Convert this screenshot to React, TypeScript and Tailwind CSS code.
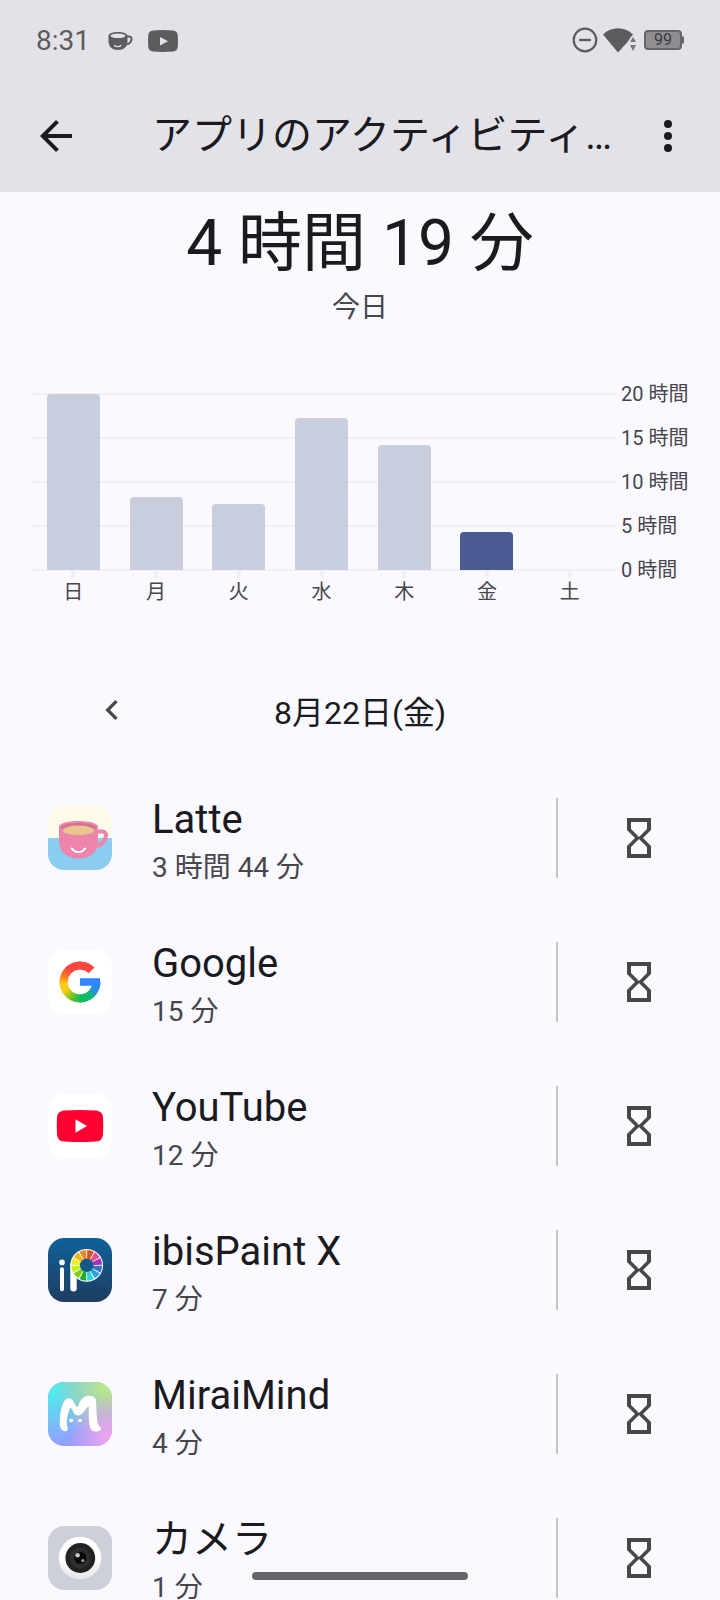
import type { ReactNode } from "react";

const axisLabels = ["20 時間", "15 時間", "10 時間", "5 時間", "0 時間"];

const days = [
  { label: "日", hours: 20 },
  { label: "月", hours: 8.3 },
  { label: "火", hours: 7.5 },
  { label: "水", hours: 17.3 },
  { label: "木", hours: 14.2 },
  { label: "金", hours: 4.32, today: true },
  { label: "土", hours: 0 },
];

function polar(cx: number, cy: number, r: number, deg: number) {
  const a = (deg * Math.PI) / 180;
  return `${(cx + r * Math.cos(a)).toFixed(2)} ${(cy + r * Math.sin(a)).toFixed(2)}`;
}

function LatteIcon() {
  return (
    <svg viewBox="0 0 64 64" className="size-16 rounded-2xl" aria-hidden="true">
      <rect width="64" height="32" fill="#fffbe8" />
      <rect y="32" width="64" height="32" fill="#8bccf1" />
      <path d="M49 25.500h5.500a3.500 3.500 0 0 1 3.500 4c-.5 5-4 9-10 11" fill="none" stroke="#ed84ac" strokeWidth="4" />
      <path d="M11 21c0-8 39-8 39 0v14c0 11-8 17.500-19.500 17.500S11 46 11 35z" fill="#ed84ac" />
      <ellipse cx="30.500" cy="21.800" rx="17.500" ry="4.800" fill="#d76f92" />
      <ellipse cx="30.500" cy="24.400" rx="15.600" ry="4.900" fill="#e8c58f" />
      <path d="M23.500 42.500c1 .2 1.500 .8 2 1.800 2 2.400 8 2.400 10 0 .4-1 1-1.600 2-1.800" fill="none" stroke="#fff" strokeWidth="1.800" strokeLinecap="round" />
    </svg>
  );
}

const gStops: [number, number[]][] = [
  [0, [255, 70, 65]],
  [85, [255, 70, 65]],
  [115, [255, 128, 30]],
  [140, [255, 205, 20]],
  [165, [240, 205, 20]],
  [195, [110, 195, 40]],
  [225, [14, 188, 95]],
  [255, [14, 188, 110]],
  [285, [40, 145, 220]],
  [300, [49, 134, 255]],
  [400, [49, 134, 255]],
];

function gColor(t: number) {
  let i = 0;
  while (i < gStops.length - 2 && gStops[i + 1][0] < t) i++;
  const [a, ca] = gStops[i];
  const [b, cb] = gStops[i + 1];
  const k = (t - a) / (b - a);
  return `rgb(${ca.map((v, n) => Math.round(v + (cb[n] - v) * k)).join(",")})`;
}

function GoogleIcon() {
  const steps = Array.from({ length: 63 }, (_, i) => i * 5);
  return (
    <svg viewBox="0 0 64 64" className="size-16 rounded-2xl" aria-hidden="true">
      <rect width="64" height="64" fill="#fff" />
      {steps.map((t) => (
        <path
          key={t}
          d={`M${polar(32, 32, 16.4, -45 - t)}A16.400 16.400 0 0 0 ${polar(32, 32, 16.4, -45 - Math.min(t + 8, 315))}`}
          fill="none"
          stroke={gColor(t)}
          strokeWidth="8"
        />
      ))}
      <path d="M32 28.200h20.100v4.500l-1.500 3H32z" fill="#3186ff" />
    </svg>
  );
}

function YouTubeIcon() {
  return (
    <svg viewBox="0 0 64 64" className="size-16 rounded-2xl" aria-hidden="true">
      <rect width="64" height="64" fill="#fff" />
      <path d="M16 16.500q16-1 32 0 6.500.5 7 7 .5 8.500 0 17-.5 6.500-7 7-16 1-32 0-6.500-.5-7-7-.5-8.500 0-17 .5-6.500 7-7z" fill="#ff0033" />
      <path d="M27.500 25.200v13.600L39 32z" fill="#fff" />
    </svg>
  );
}

const wheelColors = [
  "#d9531f", "#e0508c", "#9d35b8", "#3273c6", "#2f9fda", "#2bd6d8",
  "#22ab2e", "#80d022", "#c2f01c", "#f0ee1e", "#f2b41f", "#e98a1e",
];

function IbisPaintIcon() {
  return (
    <svg viewBox="0 0 64 64" className="size-16 rounded-2xl" aria-hidden="true">
      <defs>
        <linearGradient id="ibis-bg" x1="0" y1="0" x2="0" y2="1">
          <stop offset="0" stopColor="#10619a" />
          <stop offset="1" stopColor="#1e3d60" />
        </linearGradient>
      </defs>
      <rect width="64" height="64" fill="url(#ibis-bg)" />
      <circle cx="14" cy="24.400" r="2.800" fill="#fff" />
      <path d="M14 31.300v20" stroke="#fff" strokeWidth="4" strokeLinecap="round" />
      <path d="M25.500 27v23.300" stroke="#fff" strokeWidth="6.400" strokeLinecap="round" />
      <circle cx="38.700" cy="27.300" r="16.400" fill="#fff" />
      {wheelColors.map((color, i) => (
        <path
          key={color}
          d={`M${polar(38.7, 27.3, 15.4, i * 30 - 88)}A15.400 15.400 0 0 1 ${polar(38.7, 27.3, 15.4, i * 30 - 62)}L${polar(38.7, 27.3, 6.5, i * 30 - 63)}A6.500 6.500 0 0 0 ${polar(38.7, 27.3, 6.5, i * 30 - 87)}z`}
          fill={color}
        />
      ))}
      <circle cx="38.700" cy="27.300" r="6.800" fill="#16578a" />
    </svg>
  );
}

function MiraiMindIcon() {
  return (
    <svg viewBox="0 0 64 64" className="size-16 rounded-2xl" aria-hidden="true">
      <defs>
        <radialGradient id="mm-a" cx="0" cy="0.1" r="0.9">
          <stop offset="0" stopColor="#49f2ea" />
          <stop offset="1" stopColor="#49f2ea" stopOpacity="0" />
        </radialGradient>
        <radialGradient id="mm-b" cx="0.95" cy="0.05" r="0.85">
          <stop offset="0" stopColor="#bdf07c" />
          <stop offset="1" stopColor="#bdf07c" stopOpacity="0" />
        </radialGradient>
        <radialGradient id="mm-c" cx="0.95" cy="0.85" r="0.65">
          <stop offset="0" stopColor="#f3a4ec" />
          <stop offset="1" stopColor="#f3a4ec" stopOpacity="0" />
        </radialGradient>
      </defs>
      <rect width="64" height="64" fill="#949eff" />
      <rect width="64" height="64" fill="url(#mm-a)" />
      <rect width="64" height="64" fill="url(#mm-b)" />
      <rect width="64" height="64" fill="url(#mm-c)" />
      <path
        d="M16.500 49.200C12.500 48.500 11.500 44 11.700 39c.2-7 1.200-13 3.600-18 1.200-3 3-4.800 5-4.800 2.500 0 4 1 5.200 3.300l2.800 5c.5.800 1 .8 1.500 0C31.500 20 33 17 35.500 15.500c2-1.400 4.300-1.900 6.500-1.700 3.500.3 5.500 2 6 5.200.5 4.500.3 9.500.7 14 .3 4 .6 7.500 1.600 9.700.8 1.800 2.700 2 2.800 3.800.1 1.900-2.800 3-5.400 3-3.200 0-5-1.500-5.700-4.500-1-4-1.200-8-1.300-12l.2-7c-.1-1.500-1.300-1.700-2.300 0L35 30.500c-1 1.800-3 2.900-5 2.900-2 0-3.200-.8-4-2.400l-2-4c-.7-1.300-1.900-1.200-2.400.3-.8 2.200-1.500 4-2 6.700-.6 3-.9 5-.8 7.500.1 2 .8 3.300.9 5 .1 1.900-1.200 3-3.200 2.700z"
        fill="#fff"
      />
      <ellipse cx="23.200" cy="38.500" rx="2" ry="1.700" fill="#fff" />
      <ellipse cx="32" cy="38.500" rx="2" ry="1.700" fill="#fff" />
    </svg>
  );
}

function CameraIcon() {
  return (
    <svg viewBox="0 0 64 64" className="size-16 rounded-2xl" aria-hidden="true">
      <defs>
        <linearGradient id="cam-ring" x1="0" y1="0" x2="0" y2="1">
          <stop offset="0.5" stopColor="#fff" />
          <stop offset="1" stopColor="#e6e6ea" />
        </linearGradient>
      </defs>
      <rect width="64" height="64" fill="#cdcfd9" />
      <circle cx="32" cy="32" r="21.300" fill="url(#cam-ring)" />
      <circle cx="32.300" cy="32" r="14.900" fill="#222224" />
      <circle cx="32.300" cy="32" r="10.500" fill="#2e2e30" />
      <circle cx="32.300" cy="32" r="6" fill="#080809" />
      <circle cx="29.600" cy="29.200" r="2.300" fill="#c8c8ca" />
      <circle cx="34.800" cy="34.600" r="1.600" fill="#9b9b9f" />
    </svg>
  );
}

const apps: { name: string; time: string; icon: ReactNode }[] = [
  { name: "Latte", time: "3 時間 44 分", icon: <LatteIcon /> },
  { name: "Google", time: "15 分", icon: <GoogleIcon /> },
  { name: "YouTube", time: "12 分", icon: <YouTubeIcon /> },
  { name: "ibisPaint X", time: "7 分", icon: <IbisPaintIcon /> },
  { name: "MiraiMind", time: "4 分", icon: <MiraiMindIcon /> },
  { name: "カメラ", time: "1 分", icon: <CameraIcon /> },
];

function StatusBar() {
  return (
    <div className="flex h-20 items-center justify-between px-9 text-[#5c5c5f]">
      <div className="flex items-center pt-0.5">
        <span className="text-[28px] leading-10">8:31</span>
        <svg viewBox="0 0 26 20" className="ml-[18px] h-5 w-[26px]" aria-hidden="true">
          <path d="M18.500 5.500h3c3.500 0 2.500 7.500-3.500 8" fill="none" stroke="currentColor" strokeWidth="2" />
          <path d="M.5 5c0-5.300 19-5.300 19 0v5c0 6-4 9-9.500 9S.5 16 .5 10z" fill="currentColor" />
          <ellipse cx="10" cy="4.800" rx="7.400" ry="2.300" fill="#e3e2e8" />
          <path d="M6.500 14.500c1.500 1.600 5 1.600 6.500 0" fill="none" stroke="#e3e2e8" strokeWidth="1.200" strokeLinecap="round" />
        </svg>
        <svg viewBox="0 0 30 22" className="ml-3.5 h-[22px] w-[30px]" aria-hidden="true">
          <path d="M5 .5q10-.8 20 0 4.300.3 4.700 4.500.5 6 0 12-.4 4.200-4.700 4.500-10 .8-20 0Q.7 21.200.3 17q-.5-6 0-12Q.7.800 5 .5z" fill="currentColor" />
          <path d="M12 7v8.500l8-4.250z" fill="#e3e2e8" />
        </svg>
      </div>
      <div className="flex items-center">
        <svg viewBox="0 0 26 26" className="size-[26px]" aria-hidden="true">
          <circle cx="13" cy="13" r="11.300" fill="none" stroke="currentColor" strokeWidth="2.200" />
          <path d="M7 13h12" stroke="currentColor" strokeWidth="2.400" />
        </svg>
        <svg viewBox="0 0 34 26" className="ml-1 h-[26px] w-[34px]" aria-hidden="true">
          <path d="M1 7.500C9-.8 23-.8 31 7.500l-2.500 3-3 4.500L16 25.500z" fill="currentColor" />
          <path d="M31 10l3 5h-6zM31 24l3-6h-6z" fill="#77777a" />
        </svg>
        <div className="ml-2 flex h-5 w-[38px] items-center justify-center rounded-sm border-2 border-[#66666a] bg-[#8f8f93] text-base leading-4 text-[#3a3a3d]">
          99
        </div>
        <div className="h-2 w-0.5 rounded-r-sm bg-[#66666a]" />
      </div>
    </div>
  );
}

function UsageChart() {
  return (
    <section aria-label="今週の利用時間" className="flex gap-[5px] px-8 pt-[65px]">
      <div className="min-w-0 flex-1">
        <div className="grid h-[178px]">
          <div className="col-start-1 row-start-1 flex flex-col justify-between">
            {axisLabels.map((label) => (
              <div key={label} className="h-0.5 bg-[#efeff4]" />
            ))}
          </div>
          <div className="z-10 col-start-1 row-start-1 flex items-end pt-px pr-[5px] pb-px">
            {days.map((day) => (
              <div key={day.label} className="flex h-full flex-1 items-end justify-center">
                <div
                  className={`w-[64%] rounded-t ${day.today ? "bg-[#4a5c92]" : "bg-[#c8cedd]"}`}
                  style={{ height: `${(day.hours / 20) * 100}%` }}
                />
              </div>
            ))}
          </div>
        </div>
        <div className="flex pr-[5px]">
          {days.map((day) => (
            <div key={day.label} className="flex flex-1 flex-col items-center">
              <div className="h-[7px] w-1 bg-[#f0f1f5]" />
              <span className="text-xl leading-7 text-[#46464c]">{day.label}</span>
            </div>
          ))}
        </div>
      </div>
      <div className="-mt-[11px] -mb-[11px] flex h-[200px] w-[67px] shrink-0 flex-col justify-between">
        {axisLabels.map((label) => (
          <span key={label} className="text-xl leading-6 whitespace-nowrap text-[#46464c]">
            {label}
          </span>
        ))}
      </div>
    </section>
  );
}

export default function App() {
  return (
    <div
      lang="ja"
      className="relative flex h-screen flex-col overflow-hidden bg-[#faf9ff] font-[Roboto,'Noto_Sans_CJK_JP',sans-serif] text-[#1a1b21]"
    >
      <header className="shrink-0 bg-[#e3e2e8]">
        <StatusBar />
        <div className="flex h-28 items-center px-7">
          <button type="button" aria-label="戻る" className="ml-1 shrink-0">
            <svg viewBox="0 0 24 24" className="size-12" fill="currentColor">
              <path d="M20 11H7.830l5.590-5.590L12 4l-8 8 8 8 1.410-1.410L7.830 13H20v-2z" />
            </svg>
          </button>
          <h1 className="ml-[72px] min-w-0 flex-1 truncate text-[40px] leading-[56px]">アプリのアクティビティ…</h1>
          <button type="button" aria-label="その他のオプション" className="shrink-0">
            <svg viewBox="0 0 24 24" className="size-12" fill="currentColor">
              <circle cx="12" cy="6" r="2" />
              <circle cx="12" cy="12" r="2" />
              <circle cx="12" cy="18" r="2" />
            </svg>
          </button>
        </div>
      </header>

      <main className="min-h-0 flex-1 overflow-y-auto [scrollbar-width:none]">
        <div className="pt-3 text-center">
          <p className="text-[64px] leading-[80px]">4 時間 19 分</p>
          <p className="mt-1 text-[28px] leading-10 text-[#46464c]">今日</p>
        </div>

        <UsageChart />

        <div className="mt-[83px] grid grid-cols-[1fr_auto_1fr] items-center">
          <button type="button" aria-label="前の日" className="mb-1.5 ml-[92px] justify-self-start text-[#46464c]">
            <svg viewBox="0 0 24 24" className="size-10" fill="currentColor">
              <path d="M15.410 7.410L14 6l-6 6 6 6 1.410-1.410L10.830 12z" />
            </svg>
          </button>
          <h2 className="text-[32px] leading-[48px]">8月22日(金)</h2>
        </div>

        <ul className="pt-[29px]">
          {apps.map((app) => (
            <li key={app.name} className="flex h-36 items-center pl-12">
              <div className="shrink-0">{app.icon}</div>
              <div className="ml-10 min-w-0 flex-1 pt-3">
                <p className="truncate text-[40px] leading-[48px]">{app.name}</p>
                <p className="text-[28px] leading-[48px] text-[#46464c]">{app.time}</p>
              </div>
              <div className="h-20 w-0.5 shrink-0 bg-[#c5c5cb]" />
              <button
                type="button"
                aria-label={`${app.name}のタイマーを設定`}
                className="flex h-full w-[162px] shrink-0 items-center justify-center text-[#46464c]"
              >
                <svg viewBox="0 0 24 24" className="size-12" fill="currentColor">
                  <path d="M6 2v6h.01L6 8.010 10 12l-4 4 .01.01H6V22h12v-5.990h-.01L18 16l-4-4 4-3.990-.01-.01H18V2H6zm10 14.500V20H8v-3.500l4-4 4 4zm-4-5l-4-4V4h8v3.500l-4 4z" />
                </svg>
              </button>
            </li>
          ))}
        </ul>
      </main>

      <div className="absolute bottom-5 left-1/2 h-2 w-[216px] -translate-x-1/2 rounded-full bg-[#66656b]" />
    </div>
  );
}
